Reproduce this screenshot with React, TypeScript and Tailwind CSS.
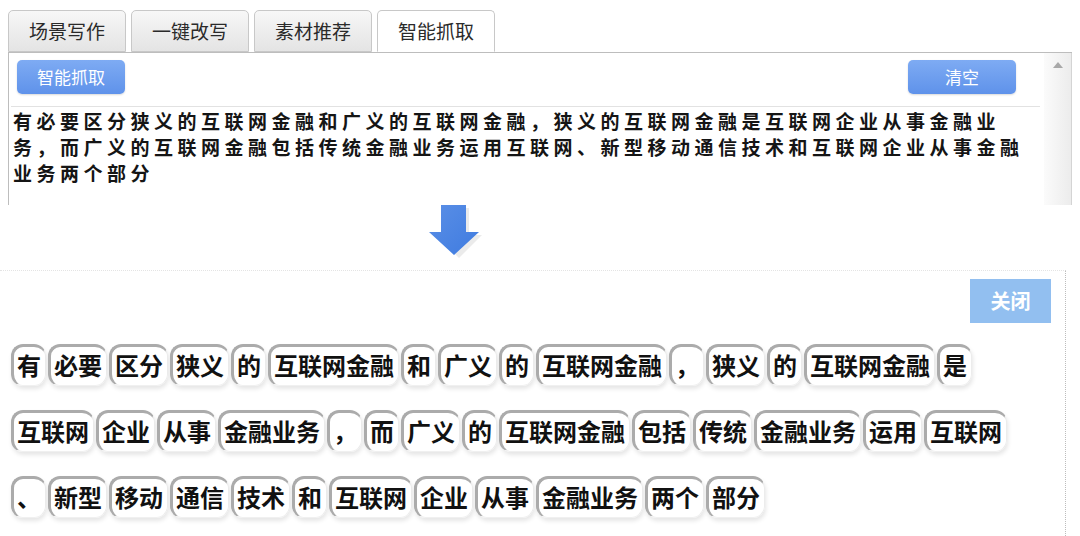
import React from "react";

const TABS = ["场景写作", "一键改写", "素材推荐", "智能抓取"];

const SOURCE_LINES = [
  "有必要区分狭义的互联网金融和广义的互联网金融，狭义的互联网金融是互联网企业从事金融业",
  "务，而广义的互联网金融包括传统金融业务运用互联网、新型移动通信技术和互联网企业从事金融",
  "业务两个部分",
];

const WORD_ROWS: string[][] = [
  ["有", "必要", "区分", "狭义", "的", "互联网金融", "和", "广义", "的", "互联网金融", "，", "狭义", "的", "互联网金融", "是"],
  ["互联网", "企业", "从事", "金融业务", "，", "而", "广义", "的", "互联网金融", "包括", "传统", "金融业务", "运用", "互联网"],
  ["、", "新型", "移动", "通信", "技术", "和", "互联网", "企业", "从事", "金融业务", "两个", "部分"],
];

const FONT = { fontFamily: '"Noto Sans CJK SC", "Noto Sans", sans-serif' };

function Tab({ label, active }: { label: string; active: boolean }) {
  return (
    <div
      className={`flex h-[42px] w-[118px] items-center justify-center rounded-t-[5px] border border-[#c8c8c8] text-[19px] text-[#2a2a2a] ${
        active
          ? "relative z-10 -mb-px border-b-white bg-white"
          : "bg-gradient-to-b from-[#f7f7f7] to-[#e4e4e4]"
      }`}
    >
      {label}
    </div>
  );
}

function BlueButton({ label }: { label: string }) {
  return (
    <button className="h-[34px] w-[108px] rounded-[5px] bg-gradient-to-b from-[#7eabf3] to-[#5f92ea] text-[17px] text-white shadow-[0_1px_2px_rgba(0,0,0,0.15)]">
      {label}
    </button>
  );
}

function Chip({ word }: { word: string }) {
  return (
    <span className="mr-[2px] inline-block rounded-[12px] border-t-[3px] border-l-[3px] border-r border-b border-t-[#ababab] border-l-[#ababab] border-r-[#ececec] border-b-[#f0f0f0] pt-[3px] pr-[4px] pb-[5px] pl-[3px] text-[24px] leading-[30px] font-semibold text-[#111] shadow-[1px_3px_4px_rgba(0,0,0,0.1)]">
      {word}
    </span>
  );
}

export default function App() {
  return (
    <div className="h-[536px] w-[1080px] overflow-hidden bg-white" style={FONT}>
      {/* top editor */}
      <div className="pt-[10px] pl-[8px]">
        <div className="flex gap-[5px]">
          {TABS.map((t, i) => (
            <Tab key={t} label={t} active={i === 3} />
          ))}
        </div>
        <div className="flex h-[153px] w-[1064px] border-t border-l border-[#bdbdbd]">
          <div className="flex flex-1 flex-col">
            <div className="flex items-center justify-between pt-[7px] pr-[28px] pl-[8px]">
              <BlueButton label="智能抓取" />
              <BlueButton label="清空" />
            </div>
            <div className="mt-[12px] mr-[4px] ml-[2px] border-t border-[#e2e2e2] pt-[1px] pl-[2px] text-[19px] leading-[26px] font-bold tracking-[4.5px] text-[#151515]">
              {SOURCE_LINES.map((l) => (
                <div key={l} className="whitespace-nowrap">
                  {l}
                </div>
              ))}
            </div>
          </div>
          <div className="flex w-[28px] justify-center border-r border-[#d4d4d4] bg-gradient-to-r from-[#fbfbfb] to-[#ececec] pt-[9px]">
            <svg width="10" height="6" viewBox="0 0 10 6">
              <path d="M5 0 L10 6 L0 6 Z" fill="#a8a8a8" />
            </svg>
          </div>
        </div>
      </div>

      {/* arrow */}
      <div className="h-[65px] pl-[426px]">
        <svg width="60" height="56" viewBox="0 0 60 56">
          <defs>
            <linearGradient id="ag" x1="0" y1="0" x2="1" y2="1">
              <stop offset="0" stopColor="#5a8fe6" />
              <stop offset="1" stopColor="#3f7be0" />
            </linearGradient>
          </defs>
          <path d="M18 3 L43 3 L43 30 L56 30 L33 53 L10 30 L18 30 Z" fill="#000" opacity="0.08" />
          <path d="M15 0 L40 0 L40 27 L53 27 L28 50 L3 27 L15 27 Z" fill="url(#ag)" />
        </svg>
      </div>

      {/* result area */}
      <div className="h-[266px] w-[1066px] border-t border-r border-t-[#e4e4e4] border-r-[#bdbdbd] border-dotted pt-[8px] pl-[11px]">
        <div className="flex justify-end pr-[14px]">
          <button className="h-[44px] w-[81px] bg-[#92bff0] text-[20px] font-bold text-white">关闭</button>
        </div>
        <div className="mt-[21px] flex flex-col gap-[24px]">
          {WORD_ROWS.map((row, ri) => (
            <div key={ri} className="flex whitespace-nowrap">
              {row.map((w, wi) => (
                <Chip key={wi} word={w} />
              ))}
            </div>
          ))}
        </div>
      </div>
    </div>
  );
}
